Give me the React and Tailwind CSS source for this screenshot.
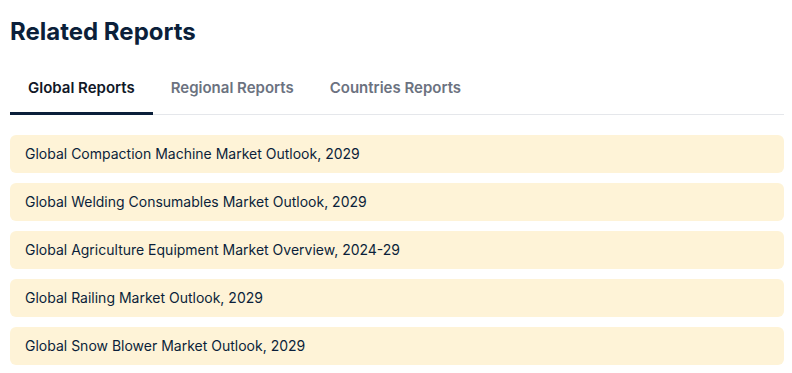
const tabs = ["Global Reports", "Regional Reports", "Countries Reports"];

const reports = [
  "Global Compaction Machine Market Outlook, 2029",
  "Global Welding Consumables Market Outlook, 2029",
  "Global Agriculture Equipment Market Overview, 2024-29",
  "Global Railing Market Outlook, 2029",
  "Global Snow Blower Market Outlook, 2029",
];

export default function App() {
  return (
    <div className="bg-white min-h-screen pl-[10px] pr-[8px] pt-[16px] font-['Inter',sans-serif]">
      <h2 className="text-[24px] font-bold text-[#0b1f3a] leading-[32px]">Related Reports</h2>
      <div className="flex border-b border-[#e5e7eb] mt-[29px]">
        {tabs.map((t, i) => (
          <div
            key={t}
            className={
              i === 0
                ? "px-[18px] pb-[12px] text-[15px] font-semibold text-[#111827] border-b-[3px] border-[#0b1f3a] -mb-px"
                : "px-[18px] pb-[12px] text-[15px] font-semibold text-[#6b7280]"
            }
          >
            {t}
          </div>
        ))}
      </div>
      <div className="flex flex-col gap-[10px] mt-[20px]">
        {reports.map((r) => (
          <div key={r} className="bg-[#fef3d7] rounded-[6px] h-[38px] flex items-center px-[15px] text-[14px] text-[#0b1f3a]">
            {r}
          </div>
        ))}
      </div>
    </div>
  );
}
